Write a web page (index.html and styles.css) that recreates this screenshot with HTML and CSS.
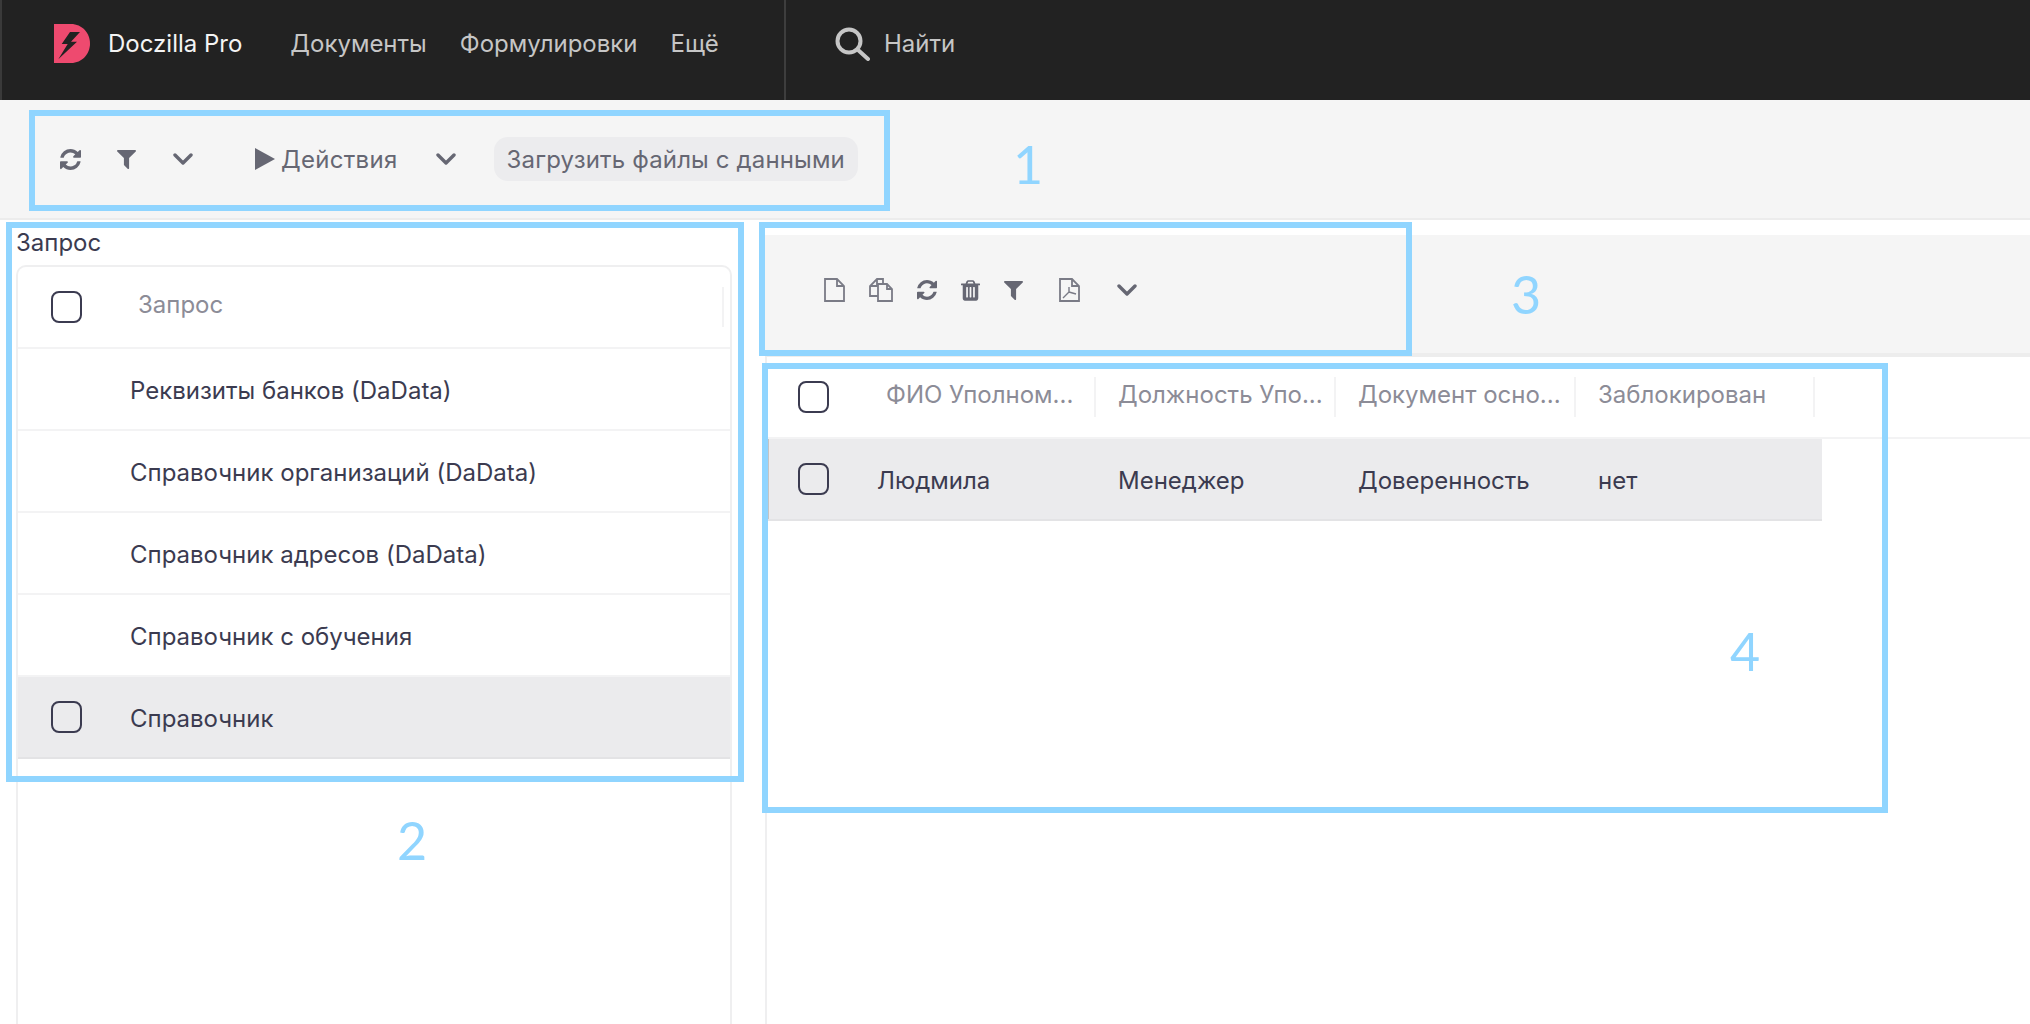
FILE: index.html
```html
<!DOCTYPE html>
<html lang="ru">
<head>
  <meta charset="UTF-8" />
  <title>Doczilla Pro</title>
  <link rel="stylesheet" href="styles.css">
</head>
<body>
  <!-- Icon set, reused by both toolbars -->
  <svg class="sprite" xmlns="http://www.w3.org/2000/svg">
    <symbol id="i-refresh" viewBox="0 0 1536 1536"><path d="M1511 928q0 5-1 7-64 268-268 434.5t-478 166.5q-146 0-282.5-55t-243.5-157l-129 129q-19 19-45 19t-45-19-19-45v-448q0-26 19-45t45-19h448q26 0 45 19t19 45-19 45l-137 137q71 66 161 102t187 36q134 0 250-65t186-179q11-17 53-117 8-23 30-23h192q13 0 22.5 9.5t9.5 22.5zm25-800v448q0 26-19 45t-45 19h-448q-26 0-45-19t-19-45 19-45l138-138q-148-137-349-137-134 0-250 65t-186 179q-11 17-53 117-8 23-30 23h-199q-13 0-22.5-9.5t-9.5-22.5v-7q65-268 270-434.5t480-166.5q146 0 284 55.5t245 156.5l130-129q19-19 45-19t45 19 19 45z"/></symbol>
    <symbol id="i-filter" viewBox="0 128 1408 1408"><path d="M1403 167q17 41-14 70l-493 493v742q0 42-39 59-13 5-25 5-27 0-45-19l-256-256q-19-19-19-45v-486l-493-493q-31-29-14-70 17-39 59-39h1280q42 0 59 39z"/></symbol>
    <symbol id="i-trash" viewBox="0 0 1408 1536"><path d="M512 1248v-704q0-14-9-23t-23-9h-64q-14 0-23 9t-9 23v704q0 14 9 23t23 9h64q14 0 23-9t9-23zm256 0v-704q0-14-9-23t-23-9h-64q-14 0-23 9t-9 23v704q0 14 9 23t23 9h64q14 0 23-9t9-23zm256 0v-704q0-14-9-23t-23-9h-64q-14 0-23 9t-9 23v704q0 14 9 23t23 9h64q14 0 23-9t9-23zm-544-992h448l-48-117q-7-9-17-11h-317q-10 2-17 11zm928 32v64q0 14-9 23t-23 9h-96v948q0 83-47 143.5t-113 60.5h-832q-66 0-113-58.5t-47-141.5v-952h-96q-14 0-23-9t-9-23v-64q0-14 9-23t23-9h309l70-167q15-37 54-63t79-26h320q40 0 79 26t54 63l70 167h309q14 0 23 9t9 23z"/></symbol>
    <symbol id="i-chevron" viewBox="0 0 20 12"><path d="M2 2l8 8 8-8" fill="none" stroke="currentColor" stroke-width="3.4" stroke-linecap="round" stroke-linejoin="round"/></symbol>
  </svg>

  <header class="topbar">
    <div class="topbar-left">
      <svg class="logo" viewBox="0 0 36 39">
        <path d="M0 0H17C28 0 36 9 36 19.5S28 39 17 39H0Z" fill="#ee4a6f"/>
        <path d="M16 8H26L17 17.7H23L4.3 35.3L13.7 20H7.7Z" fill="#222"/>
      </svg>
      <span class="brand">Doczilla Pro</span>
      <nav class="nav">
        <a>Документы</a>
        <a>Формулировки</a>
        <a>Ещё</a>
      </nav>
    </div>
    <div class="search">
      <svg class="search-icon" viewBox="0 0 35 34">
        <circle cx="14" cy="14" r="11.5" fill="none" stroke="#c6c6c6" stroke-width="4"/>
        <path d="M22.5 22.5L33 32" fill="none" stroke="#c6c6c6" stroke-width="4" stroke-linecap="round"/>
      </svg>
      <span>Найти</span>
    </div>
  </header>

  <div class="toolbar toolbar-main">
    <svg class="icon i-21"><use href="#i-refresh"/></svg>
    <svg class="icon i-19 ml-36"><use href="#i-filter"/></svg>
    <svg class="icon chevron ml-37"><use href="#i-chevron"/></svg>
    <svg class="icon play ml-62" viewBox="0 0 20 22"><path d="M0 0L20 11L0 22Z"/></svg>
    <span class="tool-label">Действия</span>
    <svg class="icon chevron ml-38"><use href="#i-chevron"/></svg>
    <button class="pill">Загрузить файлы с данными</button>
  </div>

  <main class="content">
    <section class="left-panel">
      <div class="panel-title">Запрос</div>
      <div class="card">
        <div class="row head-row">
          <span class="check"></span>
          <div class="th"><span>Запрос</span></div>
        </div>
        <div class="row"><span class="cell">Реквизиты банков (DaData)</span></div>
        <div class="row"><span class="cell">Справочник организаций (DaData)</span></div>
        <div class="row"><span class="cell">Справочник адресов (DaData)</span></div>
        <div class="row"><span class="cell">Справочник с обучения</span></div>
        <div class="row selected"><span class="check"></span><span class="cell">Справочник</span></div>
      </div>
    </section>

    <section class="right-panel">
      <div class="toolbar toolbar-sub">
        <svg class="icon doc" viewBox="0 0 21 24">
          <path d="M1 1H13L20 8V23H1Z M13 1V8H20" class="line"/>
        </svg>
        <svg class="icon doc-copy" viewBox="0 0 24 24">
          <path d="M9 18H1V8L8 1H14V6 M8 1V8H1" class="line"/>
          <path d="M9 6H18L23 11V23H9Z M18 6V11H23" class="line"/>
        </svg>
        <svg class="icon i-20"><use href="#i-refresh"/></svg>
        <svg class="icon i-trash"><use href="#i-trash"/></svg>
        <svg class="icon i-19"><use href="#i-filter"/></svg>
        <svg class="icon doc ml-12" viewBox="0 0 21 24">
          <path d="M1 1H13L20 8V23H1Z M13 1V8H20" class="line"/>
          <path d="M4 20L10 14L10 9 M10 14L17 16" class="line thin"/>
        </svg>
        <svg class="icon chevron ml-13"><use href="#i-chevron"/></svg>
      </div>

      <div class="table">
        <div class="table-head">
          <div class="check-cell"><span class="check"></span></div>
          <div class="col-head first"><span>ФИО Уполном...</span></div>
          <div class="col-head"><span>Должность Упо...</span></div>
          <div class="col-head"><span>Документ осно...</span></div>
          <div class="col-head"><span>Заблокирован</span></div>
        </div>
        <div class="table-row">
          <div class="check-cell"><span class="check"></span></div>
          <div class="col-cell first">Людмила</div>
          <div class="col-cell">Менеджер</div>
          <div class="col-cell">Доверенность</div>
          <div class="col-cell">нет</div>
        </div>
      </div>
    </section>
  </main>

  <!-- Numbered frames drawn on top of the screenshot -->
  <div class="frame frame-1"></div>
  <div class="frame frame-2"></div>
  <div class="frame frame-3"></div>
  <div class="frame frame-4"></div>
  <span class="mark mark-1">1</span>
  <span class="mark mark-2">2</span>
  <span class="mark mark-3">3</span>
  <span class="mark mark-4">4</span>
</body>
</html>
```

FILE: styles.css
```css
* {
  box-sizing: border-box;
}
html, body {
  height: 100%;
}
body {
  margin: 0;
  background-color: #fff;
  color: #3b3b50;
  font-family: Inter, "Liberation Sans", sans-serif;
  font-size: 24px;
  overflow: hidden;
  position: relative;
}
.sprite {
  display: none;
}

/* Top bar */
.topbar {
  height: 100px;
  background-color: #222;
  border-left: 2px solid #3a3a3a;
  display: flex;
}
.topbar-left {
  width: 784px;
  padding: 0 0 13px 52px;
  border-right: 2px solid #3e3e3e;
  display: flex;
  align-items: center;
}
.logo {
  width: 36px;
  height: 39px;
}
.brand {
  color: #f4f4f4;
  margin-left: 18px;
}
.nav {
  display: flex;
  gap: 33px;
  margin-left: 48px;
  color: #c6c6c6;
}
.search {
  display: flex;
  align-items: center;
  gap: 14px;
  padding: 0 0 13px 49px;
  color: #c6c6c6;
}
.search-icon {
  width: 35px;
  height: 34px;
}

/* Toolbars */
.toolbar {
  display: flex;
  align-items: center;
  background-color: #f5f5f5;
  color: #666773;
}
.toolbar-main {
  height: 120px;
  padding-left: 60px;
  border-bottom: 2px solid #ececec;
}
.toolbar-sub {
  height: 122px;
  margin-top: 15px;
  padding: 0 0 8px 59px;
  gap: 24px;
  border-bottom: 4px solid #ededed;
}
.icon {
  fill: currentColor;
  flex: none;
}
.i-21 { width: 21px; height: 21px; }
.i-20 { width: 20px; height: 20px; }
.i-19 { width: 19px; height: 19px; }
.i-trash { width: 19px; height: 21px; }
.chevron { width: 20px; height: 12px; }
.play { width: 20px; height: 22px; }
.doc { width: 21px; height: 24px; }
.doc-copy { width: 24px; height: 24px; }
.line {
  fill: none;
  stroke: #7a7b86;
  stroke-width: 1.8;
}
.thin {
  stroke-width: 1.4;
}
.ml-12 { margin-left: 12px; }
.ml-13 { margin-left: 13px; }
.ml-36 { margin-left: 36px; }
.ml-37 { margin-left: 37px; }
.ml-38 { margin-left: 38px; }
.ml-62 { margin-left: 62px; }
.tool-label {
  margin-left: 6px;
  letter-spacing: .3px;
}
.pill {
  margin-left: 38px;
  height: 44px;
  padding: 0 13px;
  border: 0;
  border-radius: 14px;
  background-color: #ececee;
  color: #666773;
  font: inherit;
  letter-spacing: .15px;
}

/* Panels */
.content {
  display: flex;
  height: 804px;
}
.left-panel {
  width: 765px;
  padding: 0 33px 0 16px;
  display: flex;
  flex-direction: column;
}
.panel-title {
  height: 45px;
  padding-top: 9px;
  line-height: 28px;
}
.card {
  flex: 1;
  border: 2px solid #efeff0;
  border-bottom: 0;
  border-radius: 10px 10px 0 0;
}
.row {
  height: 82px;
  border-bottom: 2px solid #f3f3f4;
  display: flex;
  align-items: center;
  padding-left: 112px;
}
.cell {
  margin-top: 2px;
}
.head-row {
  padding-left: 33px;
  padding-right: 6px;
}
.row.selected {
  padding-left: 33px;
  background-color: #ebebed;
  border-bottom-color: #e3e3e5;
}
.row.selected .check {
  margin-right: 48px;
}
.th {
  flex: 1;
  height: 40px;
  margin-left: 56px;
  border-right: 2px solid #f3f3f4;
  display: flex;
  align-items: center;
  color: #8c8c97;
}
.th span {
  margin-top: -5px;
}
.check {
  display: block;
  flex: none;
  width: 31px;
  height: 32px;
  border: 2px solid #3b3b50;
  border-radius: 8px;
}
.right-panel {
  flex: 1;
  min-width: 0;
}

/* Right table */
.table {
  height: 667px;
  border-left: 2px solid #efeff0;
}
.table-head, .table-row {
  display: grid;
  grid-template-columns: 111px 218px 240px 240px 239px;
  align-items: center;
}
.table-head {
  height: 82px;
  border-bottom: 2px solid #f3f3f4;
}
.table-row {
  width: 1055px;
  height: 82px;
  background-color: #ebebed;
  border-bottom: 2px solid #e3e3e5;
  box-shadow: inset 2px 0 0 #c4c4c4;
}
.check-cell {
  padding-left: 31px;
}
.col-head {
  height: 40px;
  padding-left: 22px;
  border-right: 2px solid #f3f3f4;
  display: flex;
  align-items: center;
  color: #8c8c97;
  white-space: nowrap;
}
.col-head span {
  margin-top: -5px;
}
.col-head.first {
  padding-left: 8px;
}
.col-cell {
  padding-left: 22px;
  margin-top: 3px;
}
.col-cell.first {
  padding-left: 0;
  margin-left: -1px;
}

/* Annotations */
.frame {
  position: absolute;
  border: 6px solid #90d5ff;
}
.frame-1 { left: 29px; top: 110px; width: 861px; height: 101px; }
.frame-2 { left: 6px; top: 222px; width: 738px; height: 560px; }
.frame-3 { left: 759px; top: 222px; width: 653px; height: 134px; }
.frame-4 { left: 762px; top: 363px; width: 1126px; height: 450px; }
.mark {
  position: absolute;
  color: #90d5ff;
  font-family: Lato, sans-serif;
  font-size: 52px;
  line-height: 60px;
  transform: translate(-50%, -50%);
}
.mark-1 { left: 1028px; top: 164px; }
.mark-2 { left: 412px; top: 840px; }
.mark-3 { left: 1526px; top: 294px; }
.mark-4 { left: 1745px; top: 651px; }
```
